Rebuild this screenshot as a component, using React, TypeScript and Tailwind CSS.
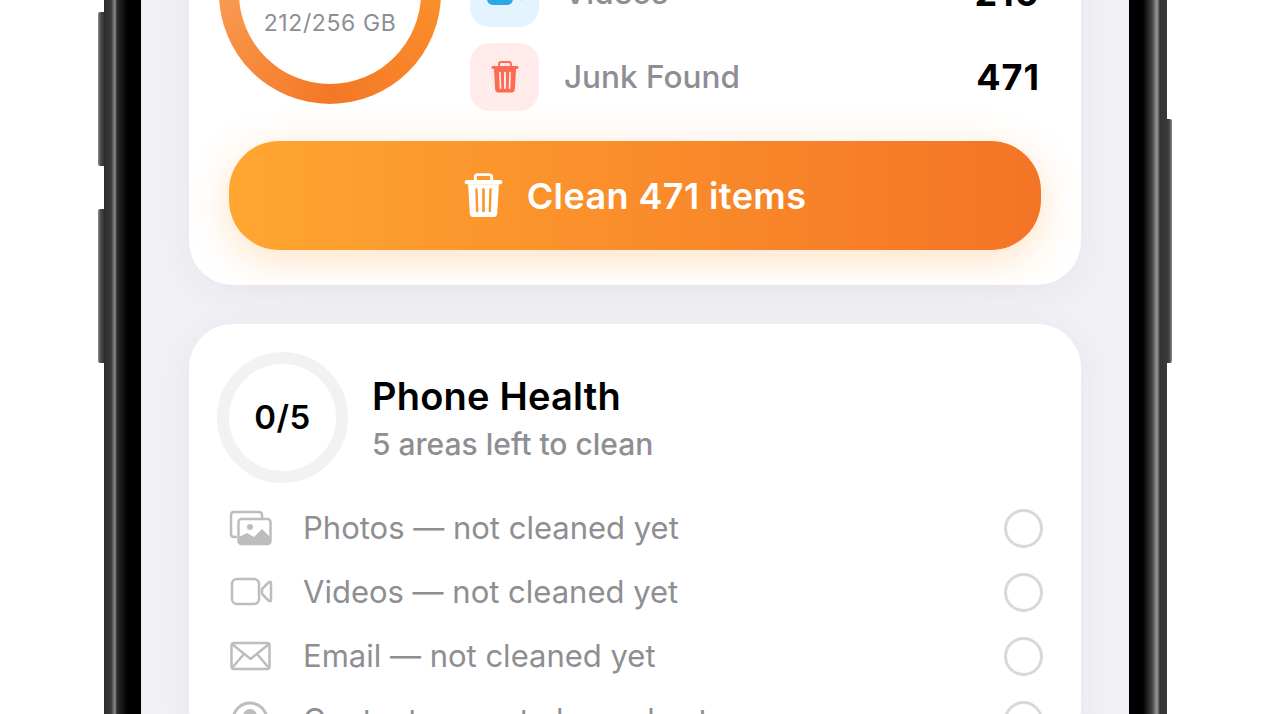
const stats = [
  { label: 'Photos', value: '261', tile: 'bg-[#fff3e0]', icon: <StatPhotoIcon /> },
  { label: 'Videos', value: '210', tile: 'bg-[#e3f4ff]', icon: <StatVideoIcon /> },
  { label: 'Junk Found', value: '471', tile: 'bg-[#ffecea]', icon: <TrashIcon className="h-[34px] w-[28px] text-[#ff6b52]" /> },
]

const areas = [
  { label: 'Photos — not cleaned yet', icon: <PhotosIcon /> },
  { label: 'Videos — not cleaned yet', icon: <VideoIcon /> },
  { label: 'Email — not cleaned yet', icon: <MailIcon /> },
  { label: 'Contacts — not cleaned yet', icon: <ContactIcon /> },
]

function TrashIcon({ className }: { className: string }) {
  return (
    <svg viewBox="0 0 114 130" className={className} fill="none">
      <path d="M33 22V11Q33 4 41 4H73Q81 4 81 11V22" stroke="currentColor" strokeWidth="8" />
      <rect x="2" y="20" width="110" height="12" rx="6" fill="currentColor" />
      <path
        fillRule="evenodd"
        fill="currentColor"
        d="M12 32H102L97 118Q96 128 86 128H28Q18 128 17 118ZM33 48L35 110Q35 114 39 114Q42 114 42 110L40 48Q40 44 37 44Q33 44 33 48ZM53 48V110Q53 114 57 114Q61 114 61 110V48Q61 44 57 44Q53 44 53 48ZM74 48L72 110Q72 114 75 114Q79 114 79 110L81 48Q81 44 77 44Q74 44 74 48Z"
      />
    </svg>
  )
}

function StatPhotoIcon() {
  return (
    <svg viewBox="0 0 36 28" className="h-[28px] w-[36px] text-[#ff9f2e]" fill="currentColor">
      <rect width="36" height="28" rx="5" />
    </svg>
  )
}

function StatVideoIcon() {
  return (
    <svg viewBox="0 0 36 24" className="h-[24px] w-[36px] text-[#2aa8e8]" fill="currentColor">
      <rect width="26" height="24" rx="6" />
      <path d="M29 9L34 5Q36 4 36 6V18Q36 20 34 19L29 15Z" />
    </svg>
  )
}

function PhotosIcon() {
  return (
    <svg viewBox="0 0 44 36" className="h-[36px] w-[44px] text-[#bdbdbd]" fill="none">
      <path d="M8 27H5Q2 27 2 24V5Q2 2 5 2H30Q33 2 33 5V8" stroke="currentColor" strokeWidth="2.5" />
      <rect x="9.5" y="9" width="32" height="25" rx="3" stroke="currentColor" strokeWidth="2.5" />
      <circle cx="21" cy="17" r="3" fill="currentColor" />
      <path d="M10 34V27L18 23L25 27L33 19L41 27V34Z" fill="currentColor" />
    </svg>
  )
}

function VideoIcon() {
  return (
    <svg viewBox="0 0 44 30" className="h-[30px] w-[44px] text-[#bdbdbd]" fill="none" stroke="currentColor" strokeWidth="2.5">
      <rect x="3" y="2" width="27" height="25" rx="5" />
      <path d="M33 12L40 5Q42 4 42 6V23Q42 25 40 24L33 17Z" strokeLinejoin="round" />
    </svg>
  )
}

function MailIcon() {
  return (
    <svg viewBox="0 0 44 30" className="h-[30px] w-[44px] text-[#bdbdbd]" fill="none" stroke="currentColor" strokeWidth="2.5">
      <rect x="2.5" y="2" width="38" height="26" rx="2.5" />
      <path d="M3 3L21.5 18L40 3M3 27L15 13M40 27L28 13" />
    </svg>
  )
}

function ContactIcon() {
  return (
    <svg viewBox="0 0 44 44" className="h-[44px] w-[44px] text-[#bdbdbd]" fill="none">
      <circle cx="21" cy="22" r="17" stroke="currentColor" strokeWidth="3" />
      <circle cx="21" cy="18" r="7" fill="currentColor" />
    </svg>
  )
}

function SideButton({ className }: { className: string }) {
  return <div className={`bg-[linear-gradient(90deg,#8c8c8c_0%,#4a4a4a_45%,#333333_100%)] ${className}`} />
}

export default function App() {
  return (
    <div className="flex h-[714px] w-[1270px] overflow-hidden bg-white pl-[98px] font-['Inter',sans-serif]">
      {/* volume buttons */}
      <div className="flex w-[6px] flex-col">
        <SideButton className="mt-[12px] h-[154px] rounded-l-[2px]" />
        <SideButton className="mt-[43px] h-[154px] rounded-l-[2px]" />
      </div>

      <div className="w-[37px] bg-[linear-gradient(90deg,#2c2c2c_0px,#3a3a3a_7px,#8a8a8a_11px,#2a2a2a_13px,#000000_24px)]" />

      {/* screen */}
      <div className="w-[988px] overflow-hidden bg-[#f0f0f5] px-[48px]">
        <div className="-mt-[155px] flex flex-col gap-[39px]">
          {/* storage card */}
          <div className="rounded-[44px] bg-white px-[30px] pb-[35px] pt-[30px] shadow-[0_6px_34px_rgba(60,60,90,0.05)]">
            <div className="flex items-center">
              <div className="flex h-[222px] w-[222px] shrink-0 items-center justify-center rounded-full bg-[conic-gradient(#ffa62e_0deg,#fa8f2b_90deg,#f47826_180deg,#f99a50_270deg,#ffa62e_360deg)]">
                <div className="flex h-[182px] w-[182px] flex-col items-center justify-center rounded-full bg-white">
                  <div className="h-[60px] text-5xl font-bold leading-[60px] text-black">83%</div>
                  <div className="text-[23px] leading-[28px] tracking-[0.6px] text-[#8e8e93]">212/256 GB</div>
                </div>
              </div>
              <div className="ml-[29px] mr-[11px] flex flex-1 flex-col gap-[16px]">
                {stats.map(stat => (
                  <div key={stat.label} className="flex items-center">
                    <div className={`flex h-[68px] w-[69px] items-center justify-center rounded-[20px] ${stat.tile}`}>
                      {stat.icon}
                    </div>
                    <span className="ml-[25px] flex-1 text-[31.5px] font-medium text-[#8e8e93]">{stat.label}</span>
                    <span className="text-[36px] font-bold tracking-[1px] text-black">{stat.value}</span>
                  </div>
                ))}
              </div>
            </div>
            <button className="mx-[10px] mt-[30px] flex h-[109px] w-[812px] items-center justify-center gap-[24px] rounded-[50px] bg-[linear-gradient(90deg,#ffa630,#f47426)] shadow-[0_10px_40px_rgba(255,160,60,0.3)]">
              <TrashIcon className="h-[45px] w-[39px] text-white" />
              <span className="text-[36px] font-semibold tracking-[0.4px] text-white">Clean 471 items</span>
            </button>
          </div>

          {/* phone health card */}
          <div className="rounded-[44px] bg-white px-[28px] pt-[28px] shadow-[0_6px_34px_rgba(60,60,90,0.05)]">
            <div className="flex items-center">
              <div className="flex h-[131px] w-[131px] items-center justify-center rounded-full border-[12px] border-[#f2f2f3]">
                <span className="text-[33px] font-semibold tracking-[0.5px] text-black">0/5</span>
              </div>
              <div className="ml-[24px] pt-[5px]">
                <div className="text-[38px] font-semibold leading-[48px] tracking-[0.2px] text-black">Phone Health</div>
                <div className="text-[30px] font-medium leading-[48px] text-[#8e8e93]">5 areas left to clean</div>
              </div>
            </div>
            <div className="ml-[12px] mr-[10px] mt-[13px]">
              {areas.map(area => (
                <div key={area.label} className="flex h-[64px] items-center">
                  <div className="flex w-[44px] justify-center">{area.icon}</div>
                  <span className="ml-[30px] flex-1 text-[31px] text-[#8e8e93]">{area.label}</span>
                  <div className="h-[39px] w-[39px] rounded-full border-[3px] border-[#d8d8d8]" />
                </div>
              ))}
            </div>
          </div>
        </div>
      </div>

      <div className="w-[38px] bg-[linear-gradient(90deg,#000000_14px,#444444_23px,#999999_28px,#333333_31px,#3a3a3a_38px)]" />

      {/* power button */}
      <div className="flex w-[5px] flex-col">
        <div className="mt-[119px] h-[244px] rounded-r-[2px] bg-[linear-gradient(90deg,#333333_0%,#4a4a4a_50%,#8c8c8c_100%)]" />
      </div>
    </div>
  )
}
